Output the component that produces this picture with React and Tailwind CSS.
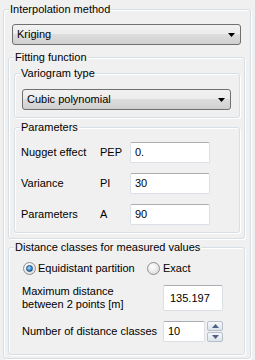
import React from "react";

const font = { fontFamily: '"Liberation Sans", Arial, sans-serif' };

function Group({ label, className = "", children }) {
  return (
    <div
      className={
        "relative border border-[#d5dfe5] rounded-[3px] shadow-[inset_1px_1px_0_#ffffff,1px_1px_0_#ffffff] " +
        className
      }
    >
      <span className="absolute top-[-7px] left-[5px] px-[1px] bg-[#f0f0f0] text-[11px] leading-[13px] text-black whitespace-nowrap">
        {label}
      </span>
      {children}
    </div>
  );
}

function Combo({ text, className = "" }) {
  return (
    <div
      className={
        "flex items-center justify-between h-[21px] border border-[#707070] rounded-[3px] bg-[linear-gradient(#f2f2f2_0%,#ebebeb_50%,#dddddd_50%,#cfcfcf_100%)] pl-[4px] pr-[4px] " +
        className
      }
    >
      <span className="text-[11px] leading-[13px] text-black">{text}</span>
      <svg width="7" height="4" viewBox="0 0 7 4" className="mr-[1px]">
        <path d="M0 0H7L3.5 4Z" fill="#000" />
      </svg>
    </div>
  );
}

function Input({ value, className = "" }) {
  return (
    <div
      className={
        "flex items-center bg-white border border-[#dbdfe6] border-t-[#abadb3] rounded-[2px] pl-[4px] text-[11px] leading-[13px] text-black " +
        className
      }
    >
      {value}
    </div>
  );
}

function ParamRow({ label, code, value }) {
  return (
    <div className="flex items-center h-[21px]">
      <span className="w-[79px] text-[11px] leading-[13px] text-black">{label}</span>
      <span className="w-[30px] text-[11px] leading-[13px] text-black">{code}</span>
      <Input value={value} className="w-[80px] h-[21px]" />
    </div>
  );
}

function Radio({ checked }) {
  return (
    <div className="w-[13px] h-[13px] rounded-full border border-[#8e8f8f] bg-[radial-gradient(circle_at_40%_35%,#ffffff_0%,#e6e6e6_60%,#cfcfcf_100%)] flex items-center justify-center">
      {checked && (
        <div className="w-[7px] h-[7px] rounded-full border border-[#194a7c] bg-[radial-gradient(circle_at_40%_35%,#b5e1fb_0%,#3a8fd6_55%,#0b4f9a_100%)]" />
      )}
    </div>
  );
}

function SpinBtn({ up }) {
  return (
    <div className="w-[16px] h-[10px] border border-[#b5bfcc] rounded-[2px] bg-[linear-gradient(#f6f8fa,#dde3ea)] flex items-center justify-center">
      <svg width="7" height="4" viewBox="0 0 7 4">
        <path d={up ? "M0 4H7L3.5 0Z" : "M0 0H7L3.5 4Z"} fill="#4d6185" />
      </svg>
    </div>
  );
}

export default function App() {
  return (
    <div
      className="w-[255px] h-[360px] bg-[#f0f0f0] pt-[9px] pl-[3px] overflow-hidden"
      style={font}
    >
      <Group label="Interpolation method" className="w-[248px] h-[350px] pl-[4px]">
        <Combo text="Kriging" className="mt-[14px] ml-[4px] w-[229px]" />

        <Group label="Fitting function" className="mt-[12px] w-[237px] h-[182px]">
          <Group label="Variogram type" className="mt-[15px] ml-[5px] w-[226px] h-[45px]">
            <Combo text="Cubic polynomial" className="mt-[15px] ml-[7px] w-[209px]" />
          </Group>

          <Group label="Parameters" className="mt-[9px] ml-[5px] w-[226px] h-[106px] pl-[6px] pt-[14px] flex flex-col gap-[10px]">
            <ParamRow label="Nugget effect" code="PEP" value="0." />
            <ParamRow label="Variance" code="PI" value="30" />
            <ParamRow label="Parameters" code="A" value="90" />
          </Group>
        </Group>

        <Group label="Distance classes for measured values" className="mt-[8px] w-[237px] h-[108px] pt-[14px]">
          <div className="flex items-center h-[13px] pl-[14px]">
            <Radio checked />
            <span className="ml-[2px] w-[109px] text-[11px] leading-[13px] text-black">
              Equidistant partition
            </span>
            <Radio />
            <span className="ml-[3px] text-[11px] leading-[13px] text-black">Exact</span>
          </div>

          <div className="flex items-center mt-[10px] pl-[13px] h-[26px]">
            <div className="w-[141px] text-[11px] leading-[13px] text-black">
              Maximum distance
              <br />
              between 2 points [m]
            </div>
            <Input value="135.197" className="w-[60px] h-[26px] pl-[6px]" />
          </div>

          <div className="flex items-center mt-[10px] pl-[13px] h-[21px]">
            <div className="w-[141px] text-[11px] leading-[13px] text-black">
              Number of distance classes
            </div>
            <Input value="10" className="w-[42px] h-[21px]" />
            <div className="ml-[2px] flex flex-col gap-[1px]">
              <SpinBtn up />
              <SpinBtn />
            </div>
          </div>
        </Group>
      </Group>
    </div>
  );
}
